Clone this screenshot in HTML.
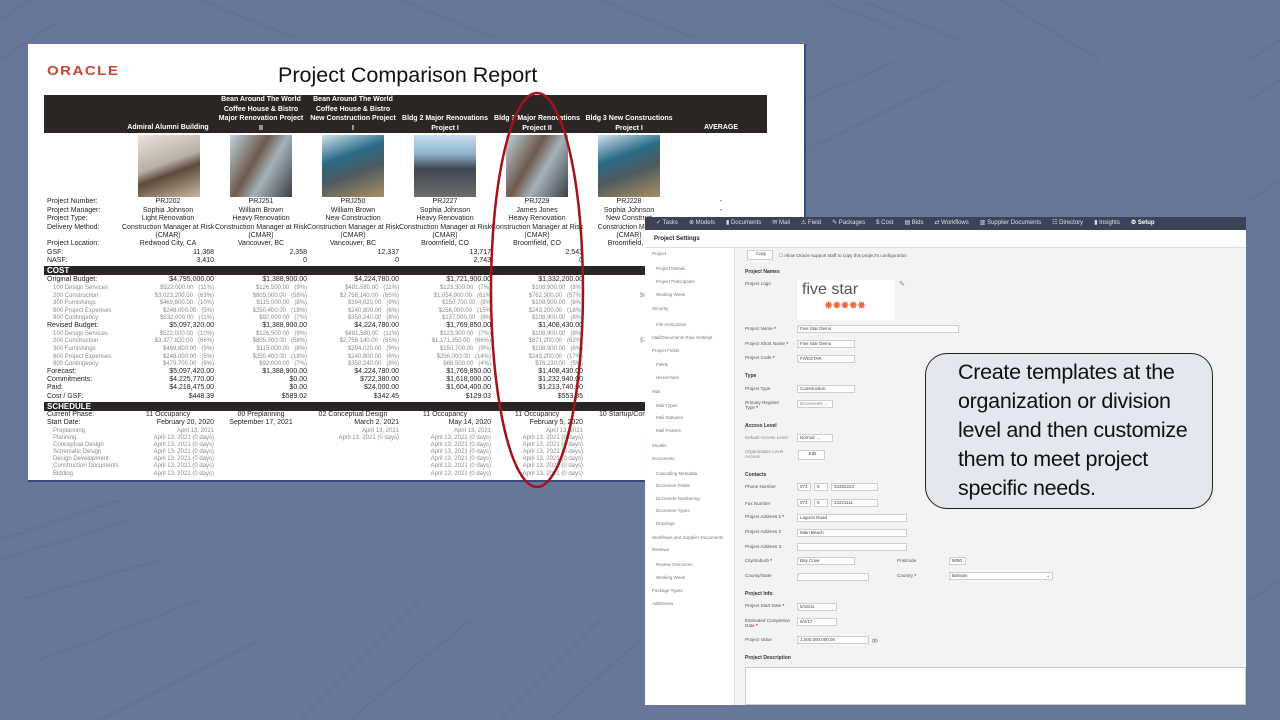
<!DOCTYPE html>
<html><head><meta charset="utf-8"><style>
*{margin:0;padding:0;box-sizing:border-box}
body{width:1280px;height:720px;overflow:hidden;background:#687699;font-family:"Liberation Sans",sans-serif;position:relative}
.a{position:absolute}
#rep{left:28px;top:44px;width:778px;height:438px;background:#fff;border-right:2px solid #3b4a7a;border-bottom:2px solid #3b4a7a}
.t{font-family:"Liberation Sans Narrow","Liberation Sans",sans-serif;font-size:7px;color:#222;white-space:nowrap;line-height:8px}
.r{position:absolute;left:47px;height:8px}
.r span{position:absolute;top:0}
.c{text-align:center;width:92px}
.n{text-align:right;width:92px}
.g{color:#8a8a8a}
.band{position:absolute;left:44px;width:723px;background:#2b2624;color:#fff;font-weight:bold;font-size:8px;padding-left:3px;font-family:"Liberation Sans Narrow","Liberation Sans",sans-serif}
.img{position:absolute;top:135px;width:62px;height:62px}
#ui{left:645px;top:217px;width:601px;height:488px;background:#f3f3f3}
.nav{left:0;top:0;width:601px;height:13px;background:#3c4257;color:#dfe2ea;font-size:6px;line-height:13px;white-space:nowrap}
.nav span{margin-left:11px}
.side{left:0;top:31px;width:90px;height:457px;background:#fff;border-right:1px solid #e3e3e3}
.si{position:absolute;font-size:4.5px;color:#777;white-space:nowrap}
.lb{position:absolute;font-size:4.6px;color:#555;white-space:nowrap}
.h{position:absolute;font-size:5px;color:#333;font-weight:bold;white-space:nowrap}
.in{position:absolute;height:8px;background:#fff;border:1px solid #cfcfcf;font-size:4.5px;color:#444;padding-left:2px;line-height:6px;white-space:nowrap}
</style></head><body>
<svg class="a" style="left:0;top:0" width="1280" height="720"><g stroke="#5e6b8c" stroke-width="2" fill="none" opacity=".35">
<path d="M0 540 L120 500 M0 560 L130 520 M20 600 L160 560 M40 660 L200 600 M100 720 L260 640 M300 720 L420 600 M350 720 L470 620 M820 0 L900 30 M860 0 L960 40 M1000 0 L1100 60 M1250 60 L1280 40 M1250 100 L1280 80 M1250 200 L1280 180 M1250 600 L1280 580 M500 720 L600 620 M550 720 L640 640 M0 20 L30 0 M0 60 L60 20 M200 0 L300 40 M400 0 L500 40 M600 0 L700 40 M806 100 L900 60 M806 150 L950 80"/></g></svg>

<div id="rep" class="a"></div>
<div class="a" style="left:47px;top:64px;font-size:15px;font-weight:bold;color:#c74634;letter-spacing:1.5px;transform:scaleY(.85);transform-origin:0 0">ORACLE</div>
<div class="a" style="left:278px;top:63px;font-size:21.5px;color:#111">Project Comparison Report</div>
<div class="a" style="left:44px;top:95px;width:723px;height:38px;background:#2b2624"></div>
<div class="a t" style="left:122px;top:124px;width:92px;text-align:center;color:#fff;font-weight:bold">Admiral Alumni Building</div>
<div class="a t" style="left:215px;top:95px;width:92px;text-align:center;color:#fff;font-weight:bold;white-space:normal;line-height:9.5px">Bean Around The World<br>Coffee House &amp; Bistro<br>Major Renovation Project<br>II</div>
<div class="a t" style="left:307px;top:95px;width:92px;text-align:center;color:#fff;font-weight:bold;line-height:9.5px">Bean Around The World<br>Coffee House &amp; Bistro<br>New Construction Project<br>I</div>
<div class="a t" style="left:399px;top:114px;width:92px;text-align:center;color:#fff;font-weight:bold;line-height:9.5px">Bldg 2 Major Renovations<br>Project I</div>
<div class="a t" style="left:491px;top:114px;width:92px;text-align:center;color:#fff;font-weight:bold;line-height:9.5px">Bldg 3 Major Renovations<br>Project II</div>
<div class="a t" style="left:583px;top:114px;width:92px;text-align:center;color:#fff;font-weight:bold;line-height:9.5px">Bldg 3 New Constructions<br>Project I</div>
<div class="a t" style="left:675px;top:124px;width:92px;text-align:center;color:#fff;font-weight:bold">AVERAGE</div>
<div class="img" style="left:138px;background:linear-gradient(160deg,#e8e4dc,#b8b0a6 45%,#5c4a3c 60%,#c9b9a0)"></div>
<div class="img" style="left:230px;background:linear-gradient(120deg,#bfd3df,#6d5a4c 40%,#a4b2bb 60%,#3d3f44)"></div>
<div class="img" style="left:322px;background:linear-gradient(160deg,#cfe2ec,#2a6b86 35%,#4f5a60 60%,#a98f62)"></div>
<div class="img" style="left:414px;background:linear-gradient(180deg,#c7dff0,#8fb3cf 30%,#3e4750 55%,#6d6d70)"></div>
<div class="img" style="left:506px;background:linear-gradient(120deg,#bfd3df,#6d5a4c 40%,#a4b2bb 60%,#3d3f44)"></div>
<div class="img" style="left:598px;background:linear-gradient(160deg,#cfe2ec,#2a6b86 35%,#4f5a60 60%,#a98f62)"></div>

<div class="t">
<div class="r" style="top:198px"><span>Project Number:</span><span class="c" style="left:75px">PRJ202</span><span class="c" style="left:168px">PRJ251</span><span class="c" style="left:260px">PRJ250</span><span class="c" style="left:352px">PRJ227</span><span class="c" style="left:444px">PRJ229</span><span class="c" style="left:536px">PRJ228</span><span class="c" style="left:628px">-</span></div>
<div class="r" style="top:207px"><span>Project Manager:</span><span class="c" style="left:75px">Sophia Johnson</span><span class="c" style="left:168px">William Brown</span><span class="c" style="left:260px">William Brown</span><span class="c" style="left:352px">Sophia Johnson</span><span class="c" style="left:444px">James Jones</span><span class="c" style="left:536px">Sophia Johnson</span><span class="c" style="left:628px">-</span></div>
<div class="r" style="top:215px"><span>Project Type:</span><span class="c" style="left:75px">Light Renovation</span><span class="c" style="left:168px">Heavy Renovation</span><span class="c" style="left:260px">New Construction</span><span class="c" style="left:352px">Heavy Renovation</span><span class="c" style="left:444px">Heavy Renovation</span><span class="c" style="left:536px">New Construct</span></div>
<div class="r" style="top:224px"><span>Delivery Method:</span><span class="c" style="left:75px">Construction Manager at Risk</span><span class="c" style="left:168px">Construction Manager at Risk</span><span class="c" style="left:260px">Construction Manager at Risk</span><span class="c" style="left:352px">Construction Manager at Risk</span><span class="c" style="left:444px">Construction Manager at Risk</span><span class="c" style="left:536px">Construction Manag</span></div>
<div class="r" style="top:232px"><span class="c" style="left:75px">(CMAR)</span><span class="c" style="left:168px">(CMAR)</span><span class="c" style="left:260px">(CMAR)</span><span class="c" style="left:352px">(CMAR)</span><span class="c" style="left:444px">(CMAR)</span><span class="c" style="left:536px">(CMAR)</span></div>
<div class="r" style="top:240px"><span>Project Location:</span><span class="c" style="left:75px">Redwood City, CA</span><span class="c" style="left:168px">Vancouver, BC</span><span class="c" style="left:260px">Vancouver, BC</span><span class="c" style="left:352px">Broomfield, CO</span><span class="c" style="left:444px">Broomfield, CO</span><span class="c" style="left:536px">Broomfield, C</span></div>
<div class="r" style="top:249px"><span>GSF:</span><span class="n" style="left:75px">11,368</span><span class="n" style="left:168px">2,358</span><span class="n" style="left:260px">12,337</span><span class="n" style="left:352px">13,717</span><span class="n" style="left:444px">2,543</span></div>
<div class="r" style="top:257px"><span>NASF:</span><span class="n" style="left:75px">3,410</span><span class="n" style="left:168px">0</span><span class="n" style="left:260px">0</span><span class="n" style="left:352px">2,743</span><span class="n" style="left:444px">0</span></div>
</div>
<div class="band" style="top:266px;height:9px;line-height:9px">COST</div>
<div class="t">
<div class="r" style="top:276px"><span>Original Budget:</span><span class="n" style="left:75px">$4,795,000.00</span><span class="n" style="left:168px">$1,388,900.00</span><span class="n" style="left:260px">$4,224,780.00</span><span class="n" style="left:352px">$1,721,900.00</span><span class="n" style="left:444px">$1,332,200.00</span><span class="n" style="left:536px">$8,9</span></div>
<div class="r g" style="top:284px;font-size:6px"><span style="left:6px">100 Design Services</span><span class="n" style="left:75px">$522,000.00 &nbsp;&nbsp;(11%)</span><span class="n" style="left:168px">$126,500.00 &nbsp;&nbsp;(9%)</span><span class="n" style="left:260px">$481,580.00 &nbsp;&nbsp;(11%)</span><span class="n" style="left:352px">$123,300.00 &nbsp;&nbsp;(7%)</span><span class="n" style="left:444px">$108,900.00 &nbsp;&nbsp;(8%)</span><span class="n" style="left:536px">$869,600.0</span></div>
<div class="r g" style="top:292px;font-size:6px"><span style="left:6px">200 Construction</span><span class="n" style="left:75px">$3,023,200.00 &nbsp;&nbsp;(63%)</span><span class="n" style="left:168px">$805,000.00 &nbsp;&nbsp;(58%)</span><span class="n" style="left:260px">$2,758,140.00 &nbsp;&nbsp;(65%)</span><span class="n" style="left:352px">$1,054,900.00 &nbsp;&nbsp;(61%</span><span class="n" style="left:444px">$762,300.00 &nbsp;&nbsp;(57%)</span><span class="n" style="left:536px">$6,444,900.0</span></div>
<div class="r g" style="top:299px;font-size:6px"><span style="left:6px">300 Furnishings</span><span class="n" style="left:75px">$469,800.00 &nbsp;&nbsp;(10%)</span><span class="n" style="left:168px">$115,000.00 &nbsp;&nbsp;(8%)</span><span class="n" style="left:260px">$394,020.00 &nbsp;&nbsp;(9%)</span><span class="n" style="left:352px">$150,700.00 &nbsp;&nbsp;(9%</span><span class="n" style="left:444px">$108,900.00 &nbsp;&nbsp;(8%)</span><span class="n" style="left:536px">$837,000.0</span></div>
<div class="r g" style="top:307px;font-size:6px"><span style="left:6px">800 Project Expenses</span><span class="n" style="left:75px">$248,000.00 &nbsp;&nbsp;(5%)</span><span class="n" style="left:168px">$250,400.00 &nbsp;&nbsp;(18%)</span><span class="n" style="left:260px">$240,800.00 &nbsp;&nbsp;(6%)</span><span class="n" style="left:352px">$256,000.00 &nbsp;&nbsp;(15%</span><span class="n" style="left:444px">$243,200.00 &nbsp;&nbsp;(18%)</span><span class="n" style="left:536px">$245,600.0</span></div>
<div class="r g" style="top:314px;font-size:6px"><span style="left:6px">900 Contingency</span><span class="n" style="left:75px">$532,000.00 &nbsp;&nbsp;(11%)</span><span class="n" style="left:168px">$92,000.00 &nbsp;&nbsp;(7%)</span><span class="n" style="left:260px">$350,240.00 &nbsp;&nbsp;(8%)</span><span class="n" style="left:352px">$137,000.00 &nbsp;&nbsp;(8%</span><span class="n" style="left:444px">$108,900.00 &nbsp;&nbsp;(8%)</span><span class="n" style="left:536px">$753,300.0</span></div>
<div class="r" style="top:322px"><span>Revised Budget:</span><span class="n" style="left:75px">$5,097,320.00</span><span class="n" style="left:168px">$1,388,900.00</span><span class="n" style="left:260px">$4,224,780.00</span><span class="n" style="left:352px">$1,769,850.00</span><span class="n" style="left:444px">$1,408,430.00</span><span class="n" style="left:536px">$9,8</span></div>
<div class="r g" style="top:330px;font-size:6px"><span style="left:6px">100 Design Services</span><span class="n" style="left:75px">$522,000.00 &nbsp;&nbsp;(10%)</span><span class="n" style="left:168px">$126,500.00 &nbsp;&nbsp;(9%)</span><span class="n" style="left:260px">$481,580.00 &nbsp;&nbsp;(11%)</span><span class="n" style="left:352px">$123,300.00 &nbsp;&nbsp;(7%)</span><span class="n" style="left:444px">$108,900.00 &nbsp;&nbsp;(8%)</span><span class="n" style="left:536px">$869,600.0</span></div>
<div class="r g" style="top:337px;font-size:6px"><span style="left:6px">200 Construction</span><span class="n" style="left:75px">$3,377,820.00 &nbsp;&nbsp;(66%)</span><span class="n" style="left:168px">$805,000.00 &nbsp;&nbsp;(58%)</span><span class="n" style="left:260px">$2,758,140.00 &nbsp;&nbsp;(65%)</span><span class="n" style="left:352px">$1,171,350.00 &nbsp;&nbsp;(66%)</span><span class="n" style="left:444px">$871,200.00 &nbsp;&nbsp;(62%)</span><span class="n" style="left:536px">$7,533,000.0</span></div>
<div class="r g" style="top:345px;font-size:6px"><span style="left:6px">300 Furnishings</span><span class="n" style="left:75px">$469,800.00 &nbsp;&nbsp;(9%)</span><span class="n" style="left:168px">$115,000.00 &nbsp;&nbsp;(8%)</span><span class="n" style="left:260px">$394,020.00 &nbsp;&nbsp;(9%)</span><span class="n" style="left:352px">$150,700.00 &nbsp;&nbsp;(9%)</span><span class="n" style="left:444px">$108,900.00 &nbsp;&nbsp;(8%)</span><span class="n" style="left:536px">$837,000.0</span></div>
<div class="r g" style="top:353px;font-size:6px"><span style="left:6px">800 Project Expenses</span><span class="n" style="left:75px">$248,000.00 &nbsp;&nbsp;(5%)</span><span class="n" style="left:168px">$250,400.00 &nbsp;&nbsp;(18%)</span><span class="n" style="left:260px">$240,800.00 &nbsp;&nbsp;(6%)</span><span class="n" style="left:352px">$256,000.00 &nbsp;&nbsp;(14%)</span><span class="n" style="left:444px">$243,200.00 &nbsp;&nbsp;(17%)</span><span class="n" style="left:536px">$245,600.0</span></div>
<div class="r g" style="top:360px;font-size:6px"><span style="left:6px">900 Contingency</span><span class="n" style="left:75px">$479,700.00 &nbsp;&nbsp;(9%)</span><span class="n" style="left:168px">$92,000.00 &nbsp;&nbsp;(7%)</span><span class="n" style="left:260px">$350,240.00 &nbsp;&nbsp;(8%)</span><span class="n" style="left:352px">$68,500.00 &nbsp;&nbsp;(4%)</span><span class="n" style="left:444px">$76,230.00 &nbsp;&nbsp;(5%)</span><span class="n" style="left:536px">$602,640.0</span></div>
<div class="r" style="top:368px"><span>Forecast:</span><span class="n" style="left:75px">$5,097,420.00</span><span class="n" style="left:168px">$1,388,900.00</span><span class="n" style="left:260px">$4,224,780.00</span><span class="n" style="left:352px">$1,769,850.00</span><span class="n" style="left:444px">$1,408,430.00</span><span class="n" style="left:536px">$9,8</span></div>
<div class="r" style="top:376px"><span>Commitments:</span><span class="n" style="left:75px">$4,225,770.00</span><span class="n" style="left:168px">$0.00</span><span class="n" style="left:260px">$722,380.00</span><span class="n" style="left:352px">$1,618,000.00</span><span class="n" style="left:444px">$1,232,940.00</span><span class="n" style="left:536px">$8,3</span></div>
<div class="r" style="top:384px"><span>Paid:</span><span class="n" style="left:75px">$4,218,475.00</span><span class="n" style="left:168px">$0.00</span><span class="n" style="left:260px">$24,000.00</span><span class="n" style="left:352px">$1,604,400.00</span><span class="n" style="left:444px">$1,213,740.00</span><span class="n" style="left:536px">$7,0</span></div>
<div class="r" style="top:393px"><span>Cost / GSF:</span><span class="n" style="left:75px">$448.39</span><span class="n" style="left:168px">$589.02</span><span class="n" style="left:260px">$342.45</span><span class="n" style="left:352px">$129.03</span><span class="n" style="left:444px">$553.85</span></div>
</div>
<div class="band" style="top:402px;height:9px;line-height:9px">SCHEDULE</div>
<div class="t">
<div class="r" style="top:411px"><span>Current Phase:</span><span class="c" style="left:75px">11 Occupancy</span><span class="c" style="left:168px">00 Preplanning</span><span class="c" style="left:260px">02 Conceptual Design</span><span class="c" style="left:352px">11 Occupancy</span><span class="c" style="left:444px">11 Occupancy</span><span class="c" style="left:536px">10 Startup/Commis</span></div>
<div class="r" style="top:419px"><span>Start Date:</span><span class="n" style="left:75px">February 20, 2020</span><span class="c" style="left:168px">September 17, 2021</span><span class="n" style="left:260px">March 2, 2021</span><span class="n" style="left:352px">May 14, 2020</span><span class="n" style="left:444px">February 5, 2020</span><span class="n" style="left:536px">Jun</span></div>
<div class="r g" style="top:427px;font-size:6px"><span style="left:6px">Preplanning</span><span class="n" style="left:75px">April 13, 2021</span><span class="n" style="left:260px">April 13, 2021</span><span class="n" style="left:352px">April 13, 2021</span><span class="n" style="left:444px">April 13, 2021</span><span class="n" style="left:536px">Ap</span></div>
<div class="r g" style="top:434px;font-size:6px"><span style="left:6px">Planning</span><span class="n" style="left:75px">April 13, 2021 (0 days)</span><span class="n" style="left:260px">April 13, 2021 (0 days)</span><span class="n" style="left:352px">April 13, 2021 (0 days)</span><span class="n" style="left:444px">April 13, 2021 (0 days)</span><span class="n" style="left:536px">April 13, 20</span></div>
<div class="r g" style="top:441px;font-size:6px"><span style="left:6px">Conceptual Design</span><span class="n" style="left:75px">April 13, 2021 (0 days)</span><span class="n" style="left:352px">April 13, 2021 (0 days)</span><span class="n" style="left:444px">April 13, 2021 (0 days)</span><span class="n" style="left:536px">April 13, 20</span></div>
<div class="r g" style="top:448px;font-size:6px"><span style="left:6px">Schematic Design</span><span class="n" style="left:75px">April 13, 2021 (0 days)</span><span class="n" style="left:352px">April 13, 2021 (0 days)</span><span class="n" style="left:444px">April 13, 2021 (0 days)</span><span class="n" style="left:536px">April 13, 20</span></div>
<div class="r g" style="top:455px;font-size:6px"><span style="left:6px">Design Development</span><span class="n" style="left:75px">April 13, 2021 (0 days)</span><span class="n" style="left:352px">April 13, 2021 (0 days)</span><span class="n" style="left:444px">April 13, 2021 (0 days)</span><span class="n" style="left:536px">April 13, 20</span></div>
<div class="r g" style="top:462px;font-size:6px"><span style="left:6px">Construction Documents</span><span class="n" style="left:75px">April 13, 2021 (0 days)</span><span class="n" style="left:352px">April 13, 2021 (0 days)</span><span class="n" style="left:444px">April 13, 2021 (0 days)</span><span class="n" style="left:536px">April 13, 20</span></div>
<div class="r g" style="top:470px;font-size:6px"><span style="left:6px">Bidding</span><span class="n" style="left:75px">April 13, 2021 (0 days)</span><span class="n" style="left:352px">April 13, 2021 (0 days)</span><span class="n" style="left:444px">April 13, 2021 (0 days)</span><span class="n" style="left:536px">April 13, 20</span></div>
</div>
<svg class="a" style="left:0;top:0" width="1280" height="720"><ellipse cx="537" cy="290" rx="46" ry="197" fill="none" stroke="#a3141a" stroke-width="2.5"/></svg>

<div id="ui" class="a">
<div class="a nav"><span>✓ Tasks</span><span>⊕ Models</span><span>▮ Documents</span><span>✉ Mail</span><span>⚠ Field</span><span>✎ Packages</span><span>$ Cost</span><span>▤ Bids</span><span>⇄ Workflows</span><span>▥ Supplier Documents</span><span>☷ Directory</span><span>▮ Insights</span><span style="color:#fff;font-weight:bold">⚙ Setup</span></div>
<div class="a" style="left:0;top:13px;width:601px;height:18px;background:#fff;border-bottom:1px solid #ddd"></div>
<div class="a" style="left:9px;top:19px;font-size:6px;font-weight:bold;color:#222">Project Settings</div>
<div class="a side"></div>
<div class="si" style="left:7px;top:34px">Project</div>
<div class="si" style="left:11px;top:49px">Project Details</div>
<div class="si" style="left:11px;top:62px">Project Participants</div>
<div class="si" style="left:11px;top:75px">Working Week</div>
<div class="si" style="left:7px;top:89px">Security</div>
<div class="si" style="left:11px;top:105px">File restrictions</div>
<div class="si" style="left:7px;top:118px">Mail/Documents Role Settings</div>
<div class="si" style="left:7px;top:131px">Project Fields</div>
<div class="si" style="left:11px;top:145px">Fields</div>
<div class="si" style="left:11px;top:158px">Hierarchies</div>
<div class="si" style="left:7px;top:172px">Mail</div>
<div class="si" style="left:11px;top:186px">Mail Types</div>
<div class="si" style="left:11px;top:198px">Mail Statuses</div>
<div class="si" style="left:11px;top:211px">Mail Footers</div>
<div class="si" style="left:7px;top:226px">Models</div>
<div class="si" style="left:7px;top:239px">Documents</div>
<div class="si" style="left:11px;top:254px">Cascading Metadata</div>
<div class="si" style="left:11px;top:266px">Document Fields</div>
<div class="si" style="left:11px;top:279px">Document Numbering</div>
<div class="si" style="left:11px;top:291px">Document Types</div>
<div class="si" style="left:11px;top:304px">Drawings</div>
<div class="si" style="left:7px;top:318px">Workflows and Supplier Documents</div>
<div class="si" style="left:7px;top:330px">Reviews</div>
<div class="si" style="left:11px;top:345px">Review Outcomes</div>
<div class="si" style="left:11px;top:358px">Working Week</div>
<div class="si" style="left:7px;top:371px">Package Types</div>
<div class="si" style="left:7px;top:384px">Addresses</div>

<div class="in" style="left:102px;top:33px;width:26px;height:10px;text-align:center">Copy</div>
<div class="lb" style="left:134px;top:36px">☐ Allow Oracle support staff to copy this project's configuration</div>
<div class="h" style="left:100px;top:52px">Project Names</div>
<div class="lb" style="left:100px;top:64px">Project Logo</div>
<div class="a" style="left:152px;top:63px;width:98px;height:40px;background:#fff"></div>
<div class="a" style="left:157px;top:64px;font-size:16px;color:#555">five star</div>
<div class="a" style="left:179px;top:82px;font-size:11px;color:#ef6a3c;letter-spacing:-1px">✸✸✸✸✸</div>
<div class="lb" style="left:254px;top:63px;font-size:7px;color:#888">✎</div>
<div class="lb" style="left:100px;top:109px">Project Name <b style="color:red">*</b></div><div class="in" style="left:152px;top:108px;width:162px">Five Star Demo</div>
<div class="lb" style="left:100px;top:124px">Project Short Name <b style="color:red">*</b></div><div class="in" style="left:152px;top:123px;width:58px">Five Star Demo</div>
<div class="lb" style="left:100px;top:138px">Project Code <b style="color:red">*</b></div><div class="in" style="left:152px;top:138px;width:58px">FIVESTAR</div>
<div class="h" style="left:100px;top:156px">Type</div>
<div class="lb" style="left:100px;top:169px">Project Type</div><div class="in" style="left:152px;top:168px;width:58px">Construction</div>
<div class="lb" style="left:100px;top:183px">Primary Register<br>Type <b style="color:red">*</b></div><div class="in" style="left:152px;top:183px;width:36px;color:#888">Documents ⌄</div>
<div class="h" style="left:100px;top:206px">Access Level</div>
<div class="lb" style="left:100px;top:218px;color:#888">Default Access Level</div><div class="in" style="left:152px;top:217px;width:36px">Normal &nbsp;⌄</div>
<div class="lb" style="left:100px;top:232px;color:#888">Organization Level<br>Access</div><div class="in" style="left:153px;top:233px;width:27px;height:10px;text-align:center">Edit</div>
<div class="h" style="left:100px;top:255px">Contacts</div>
<div class="lb" style="left:100px;top:267px">Phone Number</div><div class="in" style="left:152px;top:266px;width:14px">973</div><div class="in" style="left:169px;top:266px;width:14px">9</div><div class="in" style="left:186px;top:266px;width:47px">33332222</div>
<div class="lb" style="left:100px;top:284px">Fax Number</div><div class="in" style="left:152px;top:282px;width:14px">973</div><div class="in" style="left:169px;top:282px;width:14px">9</div><div class="in" style="left:186px;top:282px;width:47px">22221111</div>
<div class="lb" style="left:100px;top:297px">Project Address 1 <b style="color:red">*</b></div><div class="in" style="left:152px;top:297px;width:110px">Lagoon Road</div>
<div class="lb" style="left:100px;top:312px">Project Address 2</div><div class="in" style="left:152px;top:312px;width:110px">Main Beach</div>
<div class="lb" style="left:100px;top:327px">Project Address 3</div><div class="in" style="left:152px;top:326px;width:110px"></div>
<div class="lb" style="left:100px;top:341px">City/Suburb <b style="color:red">*</b></div><div class="in" style="left:152px;top:340px;width:58px">Bay Cove</div>
<div class="lb" style="left:252px;top:341px">Postcode</div><div class="in" style="left:304px;top:340px;width:17px">9050</div>
<div class="lb" style="left:100px;top:356px">County/State</div><div class="in" style="left:152px;top:356px;width:72px"></div>
<div class="lb" style="left:252px;top:356px">Country <b style="color:red">*</b></div><div class="in" style="left:304px;top:355px;width:104px">Bahrain<span style="float:right;padding-right:2px">⌄</span></div>
<div class="h" style="left:100px;top:374px">Project Info</div>
<div class="lb" style="left:100px;top:386px">Project Start Date <b style="color:red">*</b></div><div class="in" style="left:152px;top:386px;width:40px">5/15/11</div>
<div class="lb" style="left:100px;top:401px">Estimated Completion<br>Date <b style="color:red">*</b></div><div class="in" style="left:152px;top:401px;width:40px">6/4/17</div>
<div class="lb" style="left:100px;top:420px">Project Value</div><div class="in" style="left:152px;top:419px;width:72px">1,000,000,000.00</div><div class="lb" style="left:227px;top:421px">($)</div>
<div class="h" style="left:100px;top:438px">Project Description</div>
<div class="a" style="left:100px;top:450px;width:501px;height:38px;background:#fff;border:1px solid #ccc"></div>
</div>

<div class="a" style="left:925px;top:353px;width:288px;height:156px;background:#e2e8ee;border:1.3px solid #222;border-radius:22px"></div>
<div class="a" style="left:958px;top:358px;font-family:'Liberation Sans',sans-serif;font-size:21.5px;line-height:29px;color:#111;white-space:nowrap;letter-spacing:-0.3px">Create templates at the<br>organization or division<br>level and then customize<br>them to meet project<br>specific needs.</div>
</body></html>
